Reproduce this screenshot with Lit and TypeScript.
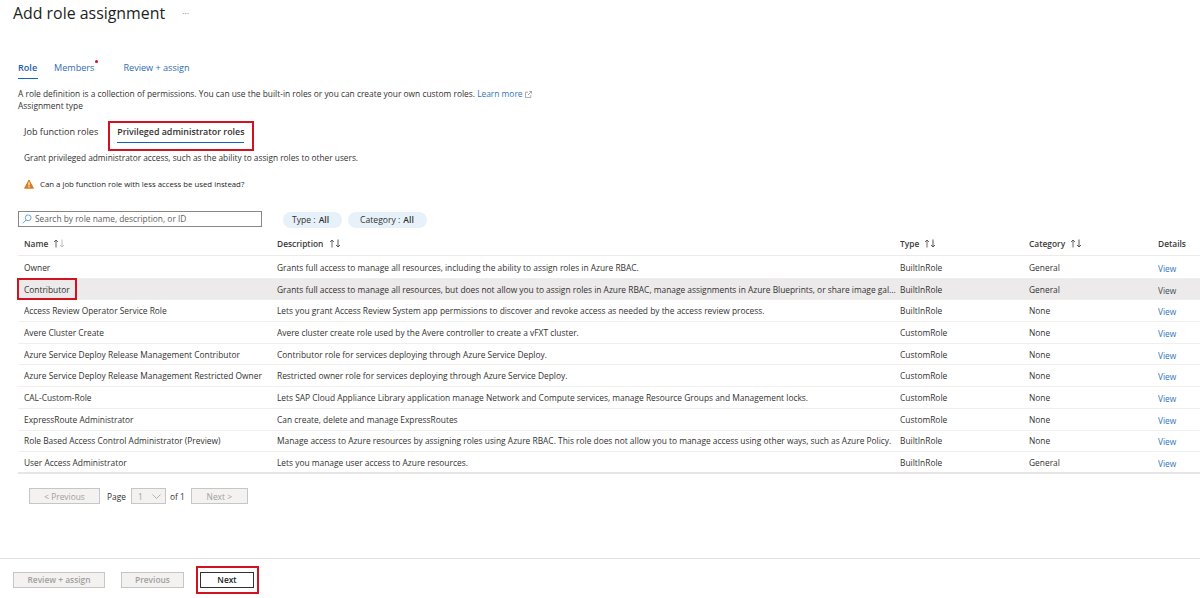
import { LitElement, html, css } from "lit";
import { customElement } from "lit/decorators.js";

const rows = [
  ["Owner", "Grants full access to manage all resources, including the ability to assign roles in Azure RBAC.", "BuiltInRole", "General"],
  ["Contributor", "Grants full access to manage all resources, but does not allow you to assign roles in Azure RBAC, manage assignments in Azure Blueprints, or share image gal...", "BuiltInRole", "General"],
  ["Access Review Operator Service Role", "Lets you grant Access Review System app permissions to discover and revoke access as needed by the access review process.", "BuiltInRole", "None"],
  ["Avere Cluster Create", "Avere cluster create role used by the Avere controller to create a vFXT cluster.", "CustomRole", "None"],
  ["Azure Service Deploy Release Management Contributor", "Contributor role for services deploying through Azure Service Deploy.", "CustomRole", "None"],
  ["Azure Service Deploy Release Management Restricted Owner", "Restricted owner role for services deploying through Azure Service Deploy.", "CustomRole", "None"],
  ["CAL-Custom-Role", "Lets SAP Cloud Appliance Library application manage Network and Compute services, manage Resource Groups and Management locks.", "CustomRole", "None"],
  ["ExpressRoute Administrator", "Can create, delete and manage ExpressRoutes", "CustomRole", "None"],
  ["Role Based Access Control Administrator (Preview)", "Manage access to Azure resources by assigning roles using Azure RBAC. This role does not allow you to manage access using other ways, such as Azure Policy.", "BuiltInRole", "None"],
  ["User Access Administrator", "Lets you manage user access to Azure resources.", "BuiltInRole", "General"],
];

const sort = (dim = false) => html`<svg class="sort" width="13" height="9" viewBox="0 0 13 9" fill="none" stroke-width="0.9">
  <path d="M3 8.5V1M1 3l2-2 2 2" stroke="#555" />
  <path d="M9 0.5V8M7 6l2 2 2-2" stroke=${dim ? "#bbb" : "#444"} />
</svg>`;

@customElement("app-root")
export class AppRoot extends LitElement {
  static styles = css`
    :host { display: block; position: relative; width: 1200px; height: 598px; overflow: hidden; background: #fff; color: #323130; font-family: "Open Sans", "Noto Sans", sans-serif; font-size: 8.4px; }
    .page { height: 598px; display: flex; flex-direction: column; }
    .main { flex: 1; padding: 0 0 0 18px; }
    .head { display: flex; align-items: center; height: 27px; margin-left: -5px; gap: 17px; }
    h1 { margin: 0; font-size: 15.9px; font-weight: 500; color: #201f1e; line-height: 27px; white-space: nowrap; }
    .more { color: #8a8886; font-size: 9px; margin-top: -1px; }
    .tabs { display: flex; margin-top: 33px; height: 19px; font-size: 9.1px; }
    .tab { color: #2f6cb3; position: relative; height: 18px; line-height: 15px; }
    .tab.on { font-weight: 600; border-bottom: 1.5px solid #0f6cbd; width: 20px; margin-right: 16px; color: #1f5da8; }
    .tab.m { margin-right: 29px; }
    .dot { position: absolute; right: -4px; top: 0; width: 3px; height: 3px; border-radius: 50%; background: #e00b1c; }
    .desc { margin-top: 8.5px; line-height: 12px; }
    .desc a, .view { color: #2f75bb; }
    .ext { vertical-align: -1px; margin-left: 2px; }
    .sub { line-height: 11px; }
    .ptabs { display: flex; margin: 12.5px 0 0 6px; gap: 19px; height: 24px; line-height: 17px; font-size: 9.1px; }
    .ptab.on { font-weight: 600; border-bottom: 1.5px solid #0f62b5; height: 19px; color: #323130; font-size: 8.9px; }
    .grant { margin: 3px 0 0 6px; line-height: 15px; font-size: 8.3px; }
    .warn { display: flex; align-items: center; gap: 6px; margin: 12px 0 0 6px; font-size: 7.8px; line-height: 14px; color: #252423; }
    .filters { display: flex; align-items: center; margin-top: 20px; height: 17px; }
    .search { box-sizing: border-box; width: 244px; height: 16px; border: 1px solid #8a8886; display: flex; align-items: center; gap: 3px; padding-left: 3px; color: #605e5c; margin-top: -2px; }
    .pill { height: 16px; border-radius: 8px; background: #e6f1fa; display: flex; align-items: center; padding: 0 13px 0 9px; margin-right: 6px; font-size: 8.6px; }
    .pill.c { padding: 0 13px 0 12px; }
    .pill b { font-weight: 600; margin-left: 3px; }
    .pills { display: flex; margin-left: 21px; }
    .row { display: grid; grid-template-columns: 253px 623px 129px 129px 1fr; height: 21.7px; align-items: center; border-bottom: 1px solid #f0efee; box-sizing: border-box; padding-left: 6px; }
    .row > span { white-space: nowrap; overflow: hidden; }
    .row.hd { font-weight: 600; height: 23px; margin-top: 4.5px; border-bottom: 1.5px solid #edebe9; color: #3b3a39; }
    .row.hl { background: #eceaea; }
    .row.last { border-bottom: 2px solid #e8e6e4; }
    .sort { margin-left: 3px; vertical-align: -1px; }
    .view { position: relative; top: 1px; }
    .hl .view { color: #3d4a57; }
    .spacer { height: 1.5px; }
    .pager { display: flex; align-items: center; margin: 14.5px 0 0 11px; gap: 7px; }
    .btn { box-sizing: border-box; height: 16px; border: 1px solid #c8c6c4; background: #f3f2f1; color: #a19f9d; display: flex; align-items: center; justify-content: center; }
    .sel { box-sizing: border-box; width: 35px; height: 16px; border: 1px solid #c8c6c4; background: #f3f2f1; color: #a19f9d; display: flex; align-items: center; justify-content: space-between; padding: 0 4px 0 6px; margin-left: -2px; }
    .of { margin-left: -3px; margin-right: -1px; }
    .foot { border-top: 1px solid #e1dfdd; height: 40px; box-sizing: border-box; display: flex; align-items: center; padding: 2px 0 0 13px; }
    .foot .btn { font-weight: 600; }
    .w71 { width: 71px; } .w57 { width: 57px; } .w92 { width: 92px; } .w63 { width: 63px; margin-left: 16px; }
    .next { box-sizing: border-box; width: 54px; height: 16px; border: 1px solid #323130; background: #fff; color: #201f1e; font-weight: 600; display: flex; align-items: center; justify-content: center; margin-left: 16px; }
    .red { position: absolute; box-sizing: border-box; border: 2px solid #d3121f; pointer-events: none; }
    .r1 { left: 108px; top: 121px; width: 146px; height: 30px; }
    .r2 { left: 17px; top: 278px; width: 60px; height: 22px; }
    .r3 { left: 196px; top: 566px; width: 63px; height: 28px; }
  `;

  render() {
    return html`
      <div class="page">
        <div class="main">
          <div class="head"><h1>Add role assignment</h1><span class="more">···</span></div>
          <div class="tabs">
            <div class="tab on">Role</div>
            <div class="tab m">Members<span class="dot"></span></div>
            <div class="tab">Review + assign</div>
          </div>
          <div class="desc">A role definition is a collection of permissions. You can use the built-in roles or you can create your own custom roles. <a>Learn more</a><svg class="ext" width="7" height="7" viewBox="0 0 7 7" fill="none" stroke="#8a8886" stroke-width="0.7"><path d="M3 1.2H.5v5.3h5.3V4M3 4l3.5-3.5M4.2.4h2.4v2.4"/></svg></div>
          <div class="sub">Assignment type</div>
          <div class="ptabs">
            <div class="ptab">Job function roles</div>
            <div class="ptab on">Privileged administrator roles</div>
          </div>
          <div class="grant">Grant privileged administrator access, such as the ability to assign roles to other users.</div>
          <div class="warn">
            <svg width="10" height="10" viewBox="0 0 10 10"><path d="M5 1L9.4 9.2H.6z" fill="#d67f22" stroke="#d67f22" stroke-width="1" stroke-linejoin="round"/><path d="M5 3.2v3.4M5 7.3v1.1" stroke="#fff" stroke-width="1.1"/></svg>
            Can a job function role with less access be used instead?
          </div>
          <div class="filters">
            <div class="search">
              <svg width="10" height="10" viewBox="0 0 10 10" fill="none" stroke="#5b9bd5" stroke-width="0.9"><circle cx="6.2" cy="3.8" r="2.9"/><path d="M4 6L.8 9.3"/></svg>
              Search by role name, description, or ID
            </div>
            <div class="pills">
              <div class="pill">Type : <b>All</b></div>
              <div class="pill c">Category : <b>All</b></div>
            </div>
          </div>
          <div class="row hd">
            <span>Name ${sort(true)}</span><span>Description ${sort()}</span><span>Type ${sort()}</span><span>Category ${sort()}</span><span>Details</span>
          </div>
          <div class="spacer"></div>
          ${rows.map((r, i) => html`
            <div class="row ${i === 1 ? "hl" : ""} ${i === rows.length - 1 ? "last" : ""}">
              <span>${r[0]}</span><span>${r[1]}</span><span>${r[2]}</span><span>${r[3]}</span><span class="view">View</span>
            </div>`)}
          <div class="pager">
            <div class="btn w71">&lt; Previous</div>
            <span>Page</span>
            <div class="sel">1 <svg width="9" height="5" viewBox="0 0 9 5" fill="none" stroke="#a19f9d" stroke-width="0.8"><path d="M.5.5l4 4 4-4"/></svg></div>
            <span class="of">of 1</span>
            <div class="btn w57">Next &gt;</div>
          </div>
        </div>
        <div class="foot">
          <div class="btn w92">Review + assign</div>
          <div class="btn w63">Previous</div>
          <div class="next">Next</div>
        </div>
      </div>
      <div class="red r1"></div>
      <div class="red r2"></div>
      <div class="red r3"></div>
    `;
  }
}
